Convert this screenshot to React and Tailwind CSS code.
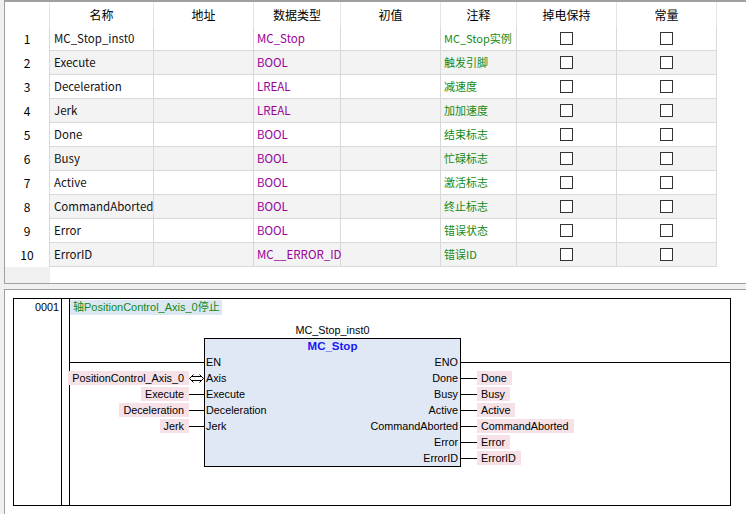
import React from "react";

const rows = [
  ["MC_Stop_inst0", "MC_Stop", "MC_Stop实例"],
  ["Execute", "BOOL", "触发引脚"],
  ["Deceleration", "LREAL", "减速度"],
  ["Jerk", "LREAL", "加加速度"],
  ["Done", "BOOL", "结束标志"],
  ["Busy", "BOOL", "忙碌标志"],
  ["Active", "BOOL", "激活标志"],
  ["CommandAborted", "BOOL", "终止标志"],
  ["Error", "BOOL", "错误状态"],
  ["ErrorID", "MC__ERROR_ID", "错误ID"],
];

const grid = "grid grid-cols-[45px_104px_100px_87px_100px_76px_100px_100px]";
const tableFont = { fontFamily: '"Noto Sans CJK SC", "Noto Sans", sans-serif' };
const ladderFont = { fontFamily: '"Liberation Sans", "Noto Sans CJK SC", sans-serif' };

function Box() {
  return <div className="w-[13px] h-[13px] border border-[#333333] bg-white" />;
}

function Wire({ w = "w-[15px]" }) {
  return <div className={`${w} h-px bg-black`} />;
}

function Label({ children }) {
  return (
    <div className="h-[14px] leading-[14px] bg-[#f6e1e7] pl-[4px] pr-[5px] whitespace-nowrap">
      {children}
    </div>
  );
}

function AxisArrow() {
  return (
    <svg width="15" height="9" viewBox="0 0 15 9" className="block">
      <path
        d="M0.5 4.5 L4.5 0.5 M0.5 4.5 L4.5 8.5 M14.5 4.5 L10.5 0.5 M14.5 4.5 L10.5 8.5 M2.5 2.5 H12.5 M2.5 6.5 H12.5"
        stroke="black"
        strokeWidth="1"
        fill="none"
      />
    </svg>
  );
}

const inputs = ["PositionControl_Axis_0", "Execute", "Deceleration", "Jerk"];
const leftPins = ["EN", "Axis", "Execute", "Deceleration", "Jerk"];
const rightPins = ["ENO", "Done", "Busy", "Active", "CommandAborted", "Error", "ErrorID"];

export default function App() {
  return (
    <div className="w-[746px] h-[514px] bg-[#f0f0f0] overflow-hidden flex flex-col">
      {/* Top variable table */}
      <div
        className="h-[284px] ml-[4px] border-l border-t-2 border-b border-[#a0a0a0] bg-white flex flex-col text-[11px] text-black"
        style={tableFont}
      >
        <div className={`${grid} h-[25px] text-[12px]`}>
          {["", "名称", "地址", "数据类型", "初值", "注释", "掉电保持", "常量"].map((h, i) => (
            <div key={i} className="border-r border-[#e4e4e4] flex items-center justify-center">
              {h}
            </div>
          ))}
        </div>
        {rows.map(([name, type, note], i) => {
          const bg = i % 2 === 1 ? "bg-[#f3f3f3]" : "bg-white";
          const cell = `border-r border-b border-[#d9d9d9] ${bg} flex items-center`;
          return (
            <div key={i} className={`${grid} h-[24px]`}>
              <div className="border-r border-[#d9d9d9] bg-white flex items-center justify-center text-[12px]">
                {i + 1}
              </div>
              <div className={`${cell} pl-[4px] text-[#111111] whitespace-nowrap text-[11.5px]`}>{name}</div>
              <div className={cell} />
              <div className={`${cell} pl-[3px] text-[#990099] whitespace-nowrap text-[11.5px]`}>{type}</div>
              <div className={cell} />
              <div className={`${cell} pl-[3px] text-[#138a13] whitespace-nowrap overflow-hidden`}>{note}</div>
              <div className={`${cell} justify-center`}>
                <Box />
              </div>
              <div className={`${cell} justify-center`}>
                <Box />
              </div>
            </div>
          );
        })}
        <div className={`${grid} flex-1`}>
          <div className="bg-[#f0f0f0]" />
        </div>
      </div>

      {/* Bottom ladder editor */}
      <div className="flex-1 mt-[5px] ml-[4px] border-l border-t border-[#a0a0a0] bg-white pl-[8px] pt-[8px] text-[10.8px] text-black" style={ladderFont}>
        <div className="w-[718px] h-[208px] border border-black flex">
          <div className="w-[48px] border-r border-black text-right pr-[2px] pt-[2px] leading-[13px]">0001</div>
          <div className="w-[7px]" />
          <div className="flex-1 border-l border-black relative">
            <div className="inline-block bg-[#dde6f3] text-[#128a12] h-[15px] leading-[15px] pl-[3px] pr-[2px] text-[11px]">
              轴PositionControl_Axis_0停止
            </div>

            {/* EN wire */}
            <div className="absolute left-0 top-[63px] w-[134px] h-px bg-black" />
            {/* ENO wire */}
            <div className="absolute left-[391px] right-0 top-[63px] h-px bg-black" />

            {/* Inputs */}
            <div className="absolute left-0 top-[71px] w-[134px] flex flex-col items-end">
              {inputs.map((t, i) => (
                <div key={i} className="h-[16px] flex items-center">
                  <Label>{t}</Label>
                  {i === 0 ? <AxisArrow /> : <Wire />}
                </div>
              ))}
            </div>

            {/* Function block */}
            <div className="absolute left-[134px] top-[23px] w-[257px]">
              <div className="h-[16px] leading-[16px] text-center">MC_Stop_inst0</div>
              <div className="border border-black bg-[#e1e8f5]">
                <div className="h-[15px] leading-[15px] text-center font-bold text-[#1818f5] text-[11.5px]">MC_Stop</div>
                <div className="flex justify-between">
                  <div className="flex flex-col pl-[1px]">
                    {leftPins.map((p) => (
                      <div key={p} className="h-[16px] leading-[16px]">{p}</div>
                    ))}
                  </div>
                  <div className="flex flex-col items-end pr-[2px]">
                    {rightPins.map((p) => (
                      <div key={p} className="h-[16px] leading-[16px]">{p}</div>
                    ))}
                  </div>
                </div>
              </div>
            </div>

            {/* Outputs */}
            <div className="absolute left-[391px] top-[71px] flex flex-col">
              {rightPins.slice(1).map((t) => (
                <div key={t} className="h-[16px] flex items-center">
                  <Wire w="w-[16px]" />
                  <Label>{t}</Label>
                </div>
              ))}
            </div>
          </div>
        </div>
      </div>
    </div>
  );
}
